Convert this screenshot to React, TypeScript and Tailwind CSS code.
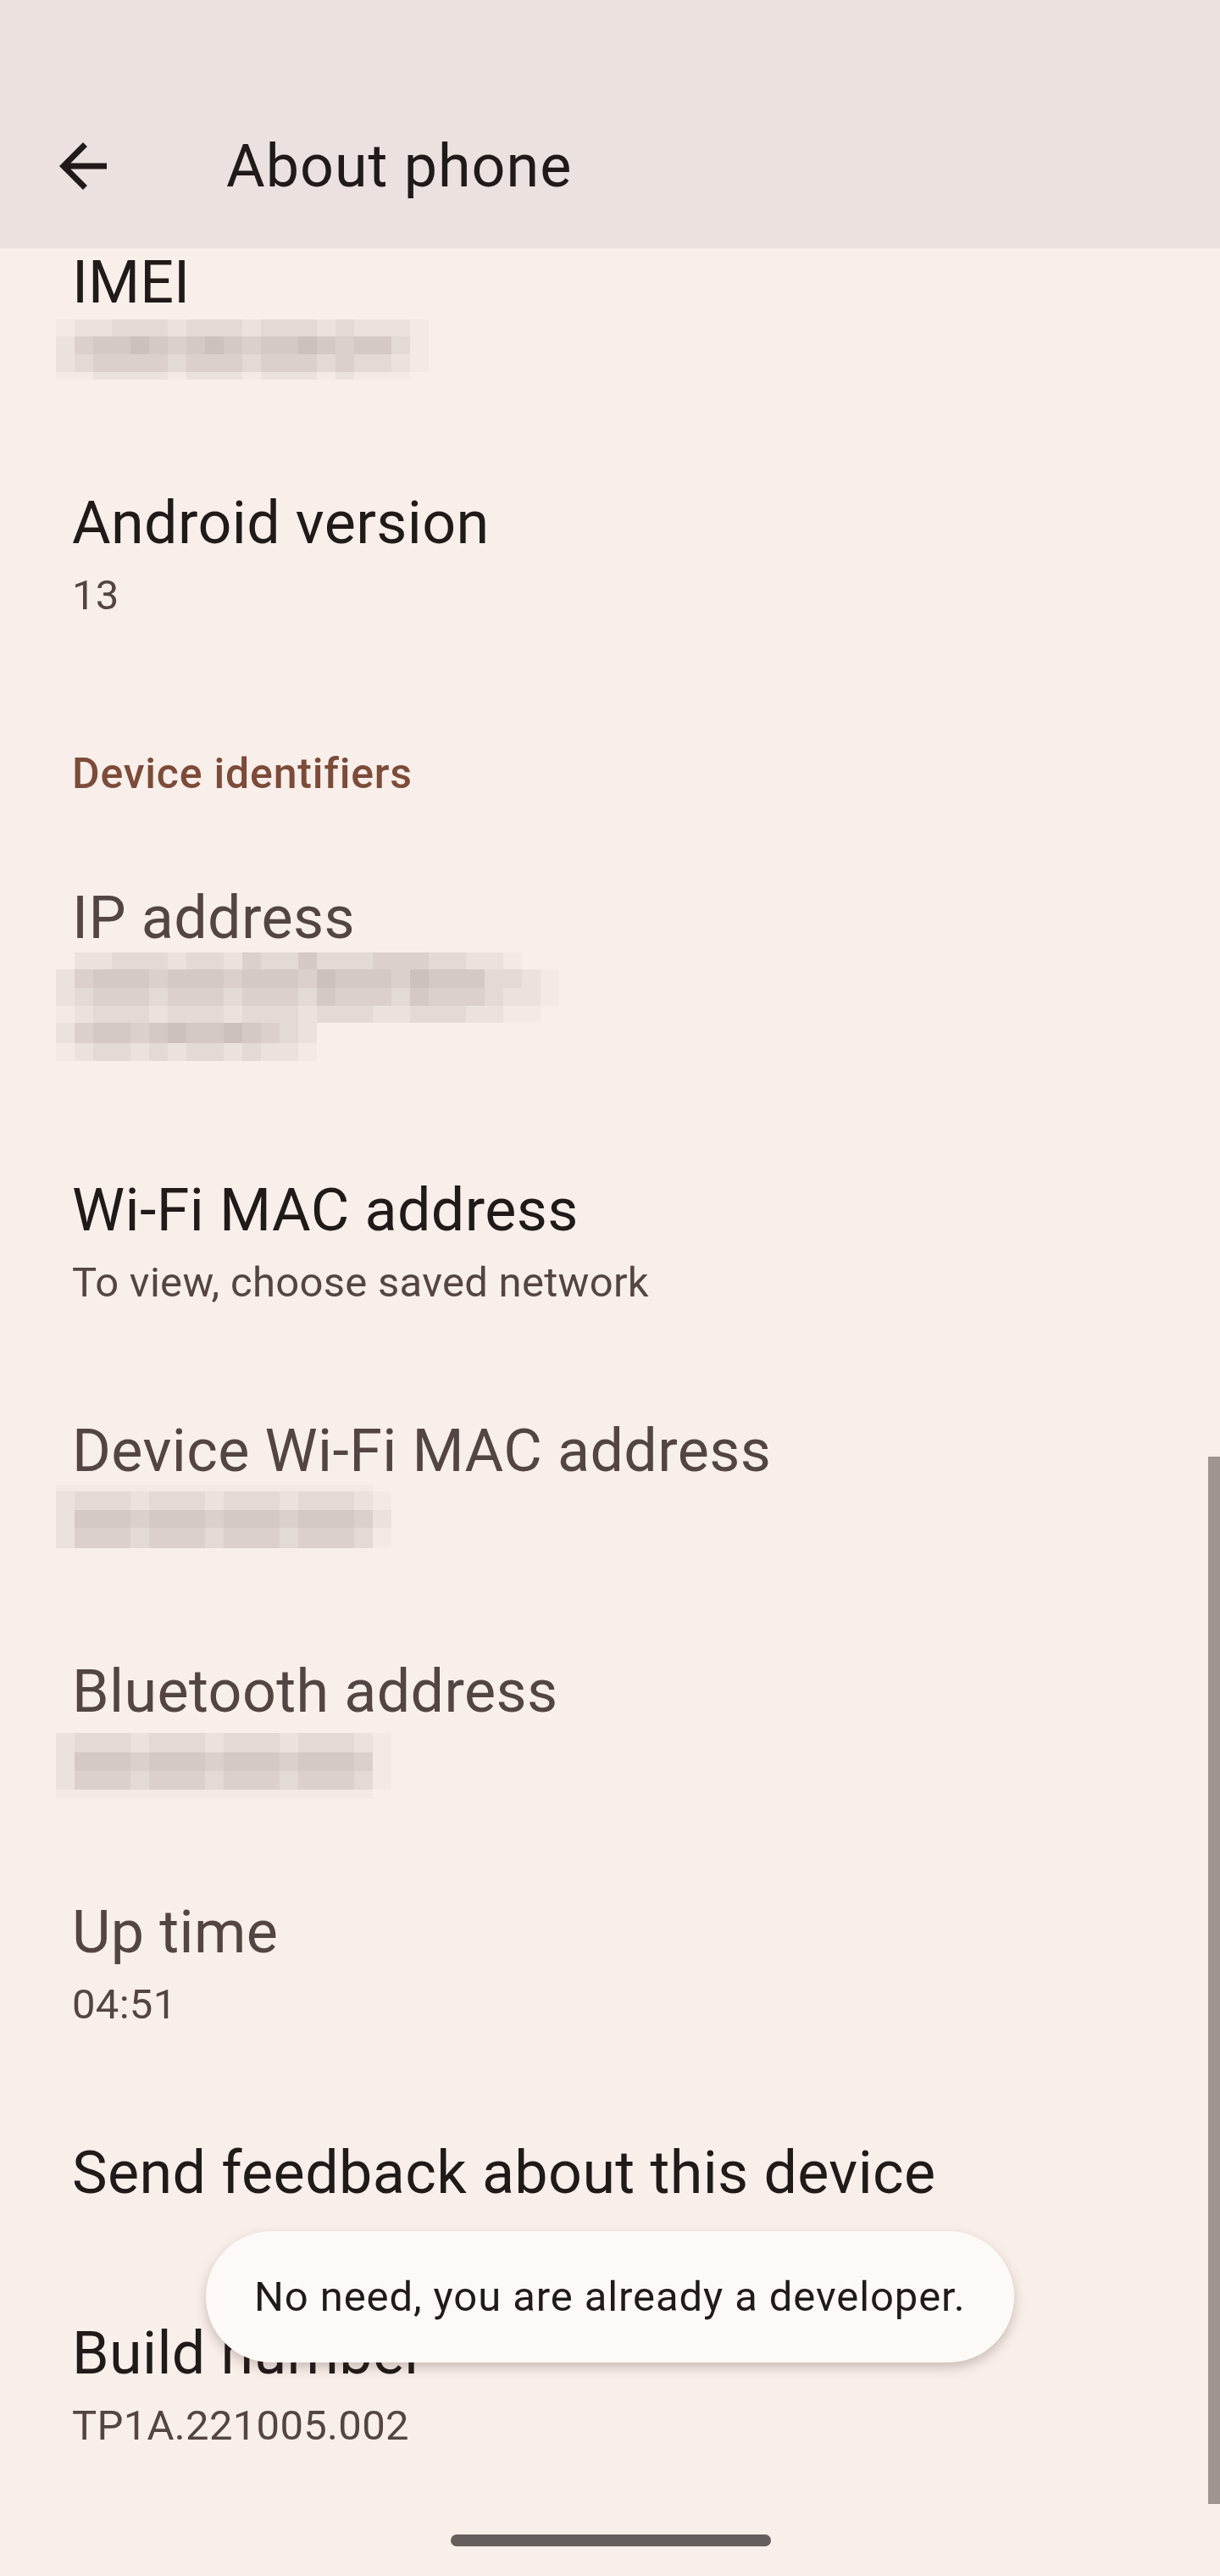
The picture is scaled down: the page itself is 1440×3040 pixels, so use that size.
import React from "react";

/* mosaic shades used to mimic the pixelated (redacted) values */
const shade: Record<string, string> = {
  "0": "bg-transparent",
  "1": "bg-[#f3e9e5]",
  "2": "bg-[#ebe1dd]",
  "3": "bg-[#e3d9d5]",
  "4": "bg-[#dbd0cc]",
  "5": "bg-[#d4c9c5]",
  "6": "bg-[#cdc1bd]",
};

type MosaicRow = { h: string; c: string };

const imeiRows: MosaicRow[] = [
  { h: "h-[20px]", c: "12233323332333232221" },
  { h: "h-[21px]", c: "24556545654556545531" },
  { h: "h-[21px]", c: "23444434443444343321" },
  { h: "h-[9px]", c: "11222212221222121110" },
];

const ipRows: MosaicRow[] = [
  { h: "h-[20px]", c: "022333233243353334443322100" },
  { h: "h-[22px]", c: "245554555455546555465553321" },
  { h: "h-[21px]", c: "234443444344435444354443221" },
  { h: "h-[20px]", c: "123332333233323332233322110" },
  { h: "h-[24px]", c: "2455456556543200" },
  { h: "h-[21px]", c: "1233232332322100" },
];

const wifiRows: MosaicRow[] = [
  { h: "h-[8px]", c: "1111111111111111100" },
  { h: "h-[22px]", c: "2333233323332333210" },
  { h: "h-[21px]", c: "2555455545554555420" },
  { h: "h-[24px]", c: "2444344434443444310" },
];

const btRows: MosaicRow[] = [
  { h: "h-[23px]", c: "2333233323332333210" },
  { h: "h-[22px]", c: "2555455545554555410" },
  { h: "h-[22px]", c: "2444344434443444310" },
  { h: "h-[11px]", c: "1111111111111111100" },
];

function Mosaic({ rows }: { rows: MosaicRow[] }) {
  return (
    <div className="-ml-[19px] flex flex-col">
      {rows.map((r, i) => (
        <div key={i} className={`flex ${r.h}`}>
          {r.c.split("").map((ch, j) => (
            <div key={j} className={`w-[22px] shrink-0 ${shade[ch]}`} />
          ))}
        </div>
      ))}
    </div>
  );
}

function Item({
  title,
  muted,
  children,
}: {
  title: string;
  muted?: boolean;
  children?: React.ReactNode;
}) {
  return (
    <div className="pl-[85px] pt-[65px] pb-[64px]">
      <div className={`text-[70px] leading-[84px] tracking-[0.4px] ${muted ? "text-[#524543]" : "text-[#201a19]"}`}>
        {title}
      </div>
      {children}
    </div>
  );
}

function Summary({ text }: { text: string }) {
  return <div className="mt-[16px] text-[49px] leading-[55px] tracking-[0.3px] text-[#524543]">{text}</div>;
}

export default function App() {
  return (
    <div className="relative h-[3040px] w-full overflow-hidden bg-[#f9efea] font-['Roboto',sans-serif]">
      {/* ---- Toolbar ---- */}
      <div className="flex h-[293px] items-start bg-[#ebe1de] pl-[56px] pt-[154px]">
        <svg width="84" height="84" viewBox="0 0 24 24" fill="#201a19">
          <path d="M20 11H7.83l5.59-5.59L12 4l-8 8 8 8 1.41-1.41L7.83 13H20v-2z" />
        </svg>
        <div className="ml-[127px] text-[70px] leading-[84px] tracking-[1px] text-[#201a19]">About phone</div>
      </div>

      {/* ---- List (scrolled) ---- */}
      <div className="-mt-[2px]">
        <div className="pl-[85px] pb-[64px]">
          <div className="text-[70px] leading-[84px] text-[#201a19]">IMEI</div>
          <div className="h-[71px] pt-[2px]">
            <Mosaic rows={imeiRows} />
          </div>
        </div>

        <Item title="Android version">
          <Summary text="13" />
        </Item>

        <div className="pl-[85px] pt-[89px] pb-[33px] text-[50px] font-medium leading-[60px] tracking-[0.8px] text-[#7c4b39]">
          Device identifiers
        </div>

        <Item title="IP address" muted>
          <div className="-mt-[1px] h-[133px]">
            <Mosaic rows={ipRows} />
          </div>
        </Item>

        <Item title="Wi-Fi MAC address">
          <Summary text="To view, choose saved network" />
        </Item>

        <Item title="Device Wi-Fi MAC address" muted>
          <div className="-mt-[2px] h-[73px]">
            <Mosaic rows={wifiRows} />
          </div>
        </Item>

        <Item title="Bluetooth address" muted>
          <div className="h-[71px] pt-[7px]">
            <Mosaic rows={btRows} />
          </div>
        </Item>

        <Item title="Up time" muted>
          <Summary text="04:51" />
        </Item>

        <Item title="Send feedback about this device" />

        <Item title="Build number">
          <Summary text="TP1A.221005.002" />
        </Item>
      </div>

      {/* ---- Scroll indicator ---- */}
      <div className="absolute right-0 top-[1719px] h-[1236px] w-[14px] bg-[#9e9591]" />

      {/* ---- Toast ---- */}
      <div className="absolute left-[243px] top-[2633px] flex h-[155px] w-[954px] items-center rounded-full bg-[#fdf9f6] pl-[57px] shadow-[0_6px_14px_rgba(60,40,35,0.25)]">
        <span className="text-[49px] leading-[56px] tracking-[0.9px] text-[#201a19]">No need, you are already a developer.</span>
      </div>

      {/* ---- Gesture bar ---- */}
      <div className="absolute left-[532px] top-[2991px] h-[14px] w-[378px] rounded-full bg-[#645e5d]" />
    </div>
  );
}
